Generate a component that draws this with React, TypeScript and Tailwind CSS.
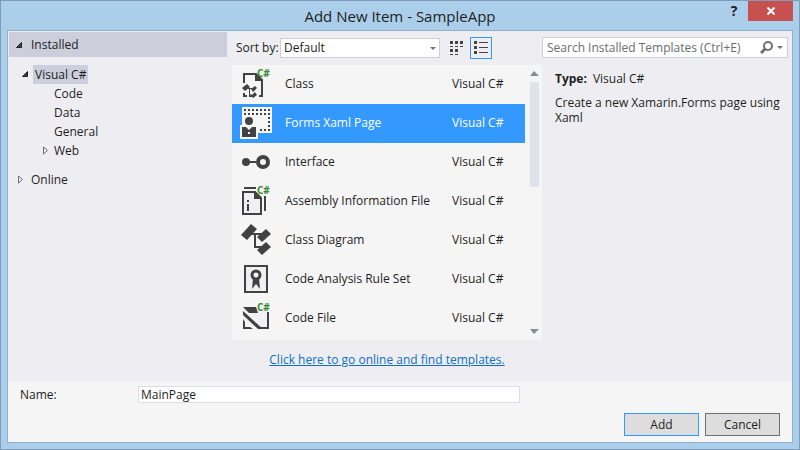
import React from "react";

const cs = (
  <text x="17" y="9" fontSize="10" fontWeight="700" fontFamily="Open Sans, sans-serif" fill="#388a34">
    C#
  </text>
);

const icons: Record<string, React.ReactNode> = {
  class: (
    <>
      <path d="M4 15V6h12l6 6v16h-3M4 25v3h3M9 28h3" fill="none" stroke="#424242" strokeWidth="2" />
      <path d="M15 5l8 8h-8z" fill="#424242" />
      <path d="M2 20l5-4 3 3-5 4zM11 21l4-3 2 2-4 4zM11 28l4-4 2 3-4 3z" fill="#424242" />
      <path d="M8 20.500h4M9.500 21v6h3" fill="none" stroke="#424242" />
      {cs}
    </>
  ),
  forms: (
    <>
      <path d="M2 0h30v26H18v6H0V18h2z" fill="#f6f6f6" />
      <path d="M4 3h27M4 7h27" stroke="#424242" strokeWidth="2" strokeDasharray="2 2" />
      <path d="M29 10v15M20 23h8" stroke="#424242" strokeWidth="2" strokeDasharray="2 2" />
      <circle cx="9" cy="14" r="4" fill="#424242" />
      <path d="M2 20h4l3 3 3-3h4v10H2z" fill="#424242" />
      <path d="M8 25h2v2H8z" fill="#f6f6f6" />
    </>
  ),
  interface: (
    <>
      <circle cx="6" cy="16" r="4" fill="#424242" />
      <path d="M9 16h7" stroke="#424242" strokeWidth="2" />
      <circle cx="23" cy="16" r="5" fill="none" stroke="#424242" strokeWidth="4" />
    </>
  ),
  assembly: (
    <>
      <path d="M3 7h12l6 6v16H3z" fill="#f0eff1" stroke="#424242" strokeWidth="2" />
      <path d="M14 6l8 8h-8zM4 2h12v2H4zM24 11h2v15h-2z" fill="#424242" />
      <path d="M7 15h2v2H7zM7 19h2v7H7z" fill="#424242" />
      {cs}
    </>
  ),
  diagram: (
    <>
      <path d="M10 10h12M15 10v13h7" fill="none" stroke="#424242" strokeWidth="2" />
      <path d="M1 11L11 0l6 5-10 11zM17 13l9-8 5 5-9 8zM17 26l9-8 5 5-9 8z" fill="#424242" />
    </>
  ),
  rules: (
    <>
      <rect x="5" y="3" width="22" height="26" fill="#f0eff1" stroke="#424242" strokeWidth="2" />
      <path d="M13 15h6l1 11-4-5-4 5z" fill="#424242" />
      <circle cx="16" cy="12" r="4" fill="#f0eff1" stroke="#424242" strokeWidth="3" />
    </>
  ),
  code: (
    <>
      <path d="M10 10h18v16H24z" fill="#f0eff1" />
      <path d="M3 5h13l2 6h9v-1h2v17h-8v-2h6V11H9zM3 9l20 18h-5L3 13zM3 17l2 3v5h5l3 2H3z" fill="#424242" />
      {cs}
    </>
  ),
};

const templates = [
  ["class", "Class"],
  ["forms", "Forms Xaml Page"],
  ["interface", "Interface"],
  ["assembly", "Assembly Information File"],
  ["diagram", "Class Diagram"],
  ["rules", "Code Analysis Rule Set"],
  ["code", "Code File"],
];

function Arrow({ open }: { open?: boolean }) {
  return (
    <svg width="8" height="9" viewBox="0 0 8 9" className="shrink-0" aria-hidden="true">
      {open ? (
        <path d="M6.500 1.500v5h-5z" fill="#424242" stroke="#1e1e1e" strokeWidth="1" />
      ) : (
        <path d="M1.500 1v7l4-3.500z" fill="none" stroke="#6d6d6d" />
      )}
    </svg>
  );
}

function Caret({ className }: { className: string }) {
  return (
    <svg width="6" height="3" viewBox="0 0 6 3" className={className} aria-hidden="true">
      <path d="M0 0h6L3 3z" fill="#717171" />
    </svg>
  );
}

export default function App() {
  return (
    <div className="flex min-h-screen w-full flex-col border border-[#7f9db9] bg-[#abcfeb] px-1.5 pb-1.5 font-['Open_Sans','Noto_Sans',sans-serif] text-xs text-[#1e1e1e]">
      <header className="relative flex h-[29px] items-center justify-center">
        <h1 className="text-[15px]">Add New Item - SampleApp</h1>
        <div className="absolute top-0 right-0 flex h-5">
          <button aria-label="Help" className="w-7 text-sm font-bold">?</button>
          <button aria-label="Close" className="flex w-[45px] items-center justify-center bg-[#c75050]">
            <svg width="8" height="8" viewBox="0 0 8 8" aria-hidden="true">
              <path d="M0.500 0.500l7 7M7.500 0.500l-7 7" stroke="#fff" strokeWidth="2" />
            </svg>
          </button>
        </div>
      </header>

      <main className="flex flex-1 flex-col border border-[#8fb0cb] bg-[#eeeef2]">
        <div className="flex flex-1 px-px pt-px">
          <nav className="w-[218px] shrink-0">
            <button className="flex h-[25px] w-full items-center gap-2 bg-[#cccedb] pt-px pl-1.5">
              <Arrow open />
              Installed
            </button>
            <div className="mt-2 flex flex-col">
              <button className="flex h-[19px] items-center gap-1 pl-3">
                <Arrow open />
                <span className="bg-[#cccedb] px-0.5 leading-[19px]">Visual C#</span>
              </button>
              <button className="h-[19px] pl-[45px] text-left">Code</button>
              <button className="h-[19px] pl-[45px] text-left">Data</button>
              <button className="h-[19px] pl-[45px] text-left">General</button>
              <button className="flex h-[19px] items-center gap-1 pl-[33px]">
                <Arrow />
                Web
              </button>
            </div>
            <button className="mt-2.5 flex h-[19px] items-center gap-1.5 pl-2">
              <Arrow />
              Online
            </button>
          </nav>

          <section className="ml-[5px] flex-1">
            <div className="mb-px flex h-8 items-center pl-1">
              <label htmlFor="sort" className="w-11">Sort by:</label>
              <div className="relative w-40">
                <select id="sort" className="block h-5 w-full appearance-none border border-[#cccedb] bg-white pl-[3px]">
                  <option>Default</option>
                </select>
                <Caret className="absolute top-[9px] right-1" />
              </div>
              <button aria-label="Small icons" className="ml-1.5 flex size-[22px] items-center justify-center">
                <svg width="14" height="14" viewBox="0 0 14 14" shapeRendering="crispEdges" aria-hidden="true">
                  <path d="M0 0h3v3H0zM5 0h3v3H5zM10 0h3v3h-3zM0 8h3v3H0zM5 8h3v3H5zM0 5h3v1H0zM5 5h3v1H5zM10 5h3v1h-3zM0 13h3v1H0zM5 13h3v1H5z" fill="#424242" />
                </svg>
              </button>
              <button aria-label="Medium icons" className="ml-0.5 flex size-[22px] items-center justify-center border border-[#3399ff]">
                <svg width="14" height="14" viewBox="0 0 14 14" shapeRendering="crispEdges" aria-hidden="true">
                  <path d="M0 0h3v3H0zM0 5h3v3H0zM0 10h3v3H0zM5 1h9v1H5zM5 6h9v1H5zM5 11h9v1H5z" fill="#424242" />
                </svg>
              </button>
            </div>
            <div className="flex bg-[#f5f5f5] pb-0.5">
              <ul className="flex-1">
                {templates.map(([id, name]) => (
                  <li key={id}>
                    <button
                      className={
                        "flex h-[39px] w-full items-start pt-[3px] pl-2 text-left leading-8 " +
                        (id === "forms" ? "bg-[#3399ff] text-white" : "")
                      }
                    >
                      <svg width="32" height="32" viewBox="0 0 32 32" className="mr-[13px] overflow-visible" aria-hidden="true">
                        {icons[id]}
                      </svg>
                      <span className="flex-1">{name}</span>
                      <span className="w-[73px]">Visual C#</span>
                    </button>
                  </li>
                ))}
              </ul>
              <div className="mr-[3px] ml-1 flex w-[10px] flex-col items-center justify-between pt-1.5 pb-1">
                <svg width="9" height="5" viewBox="0 0 9 5" aria-hidden="true">
                  <path d="M0 5h9L4 0z" fill="#868999" />
                </svg>
                <div className="mt-1.5 mb-auto h-[105px] w-[9px] bg-[#e0e1ea]" />
                <svg width="9" height="5" viewBox="0 0 9 5" aria-hidden="true">
                  <path d="M0 0h9L4 5z" fill="#868999" />
                </svg>
              </div>
            </div>
            <p className="pt-3 pb-2.5 text-center">
              <a href="#" className="text-[#0e70c0] underline">Click here to go online and find templates.</a>
            </p>
          </section>

          <aside className="mr-[3px] w-[246px] shrink-0 pt-[5px]">
            <div className="flex h-[21px] items-center border border-[#cccedb] bg-white pr-1">
              <input
                type="search"
                aria-label="Search Installed Templates"
                placeholder="Search Installed Templates (Ctrl+E)"
                className="min-w-0 flex-1 pl-1 outline-none placeholder:text-[#6d6d6d]"
              />
              <svg width="14" height="13" viewBox="0 0 14 13" aria-hidden="true">
                <circle cx="9" cy="5" r="4" fill="none" stroke="#717171" strokeWidth="2" />
                <path d="M6 8l-4 4" stroke="#717171" strokeWidth="3" />
              </svg>
              <Caret className="ml-1" />
            </div>
            <div className="pt-[13px] pl-[13px]">
              <p className="leading-4"><b className="mr-1.5">Type:</b>Visual C#</p>
              <p className="mt-2 leading-[15px]">Create a new Xamarin.Forms page using Xaml</p>
            </div>
          </aside>
        </div>

        <footer className="bg-[#f5f5f5] pb-1.5">
          <div className="flex items-center pt-1 pl-3">
            <label htmlFor="name" className="w-[118px]">Name:</label>
            <input id="name" defaultValue="MainPage" className="h-[17px] w-[382px] border border-[#dcdde6] bg-white px-0.5" />
          </div>
          <div className="mt-2.5 flex justify-end gap-1.5 pr-3">
            <button className="h-[23px] w-[75px] border border-[#3399ff] bg-[#dddddd]">Add</button>
            <button className="h-[23px] w-[75px] border border-[#707070] bg-[#dddddd]">Cancel</button>
          </div>
        </footer>
      </main>
    </div>
  );
}
